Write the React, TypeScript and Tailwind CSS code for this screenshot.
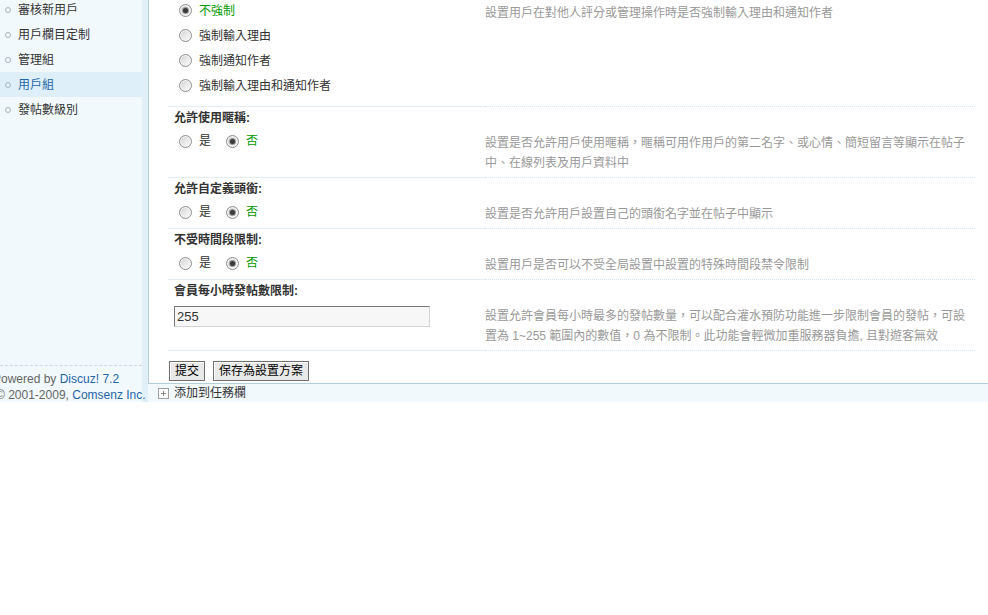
import type { ReactNode } from 'react';

const menu = [
  { label: '審核新用戶' },
  { label: '用戶欄目定制' },
  { label: '管理組' },
  { label: '用戶組', active: true },
  { label: '發帖數級別' },
];

// ─── Windows-style radio (drawn, so it doesn't pick up the browser accent) ────
function Radio({ checked = false }: Readonly<{ checked?: boolean }>) {
  return (
    <span className="inline-flex h-[13px] w-[13px] shrink-0 items-center justify-center rounded-full border border-[#8e8f8f] bg-linear-to-br from-[#cfcfcf] via-[#e9e9e9] to-[#fbfbfb] shadow-[inset_0_0_0_1px_#f4f4f4]">
      {checked && <span className="h-[5px] w-[5px] rounded-full bg-[#3a3a3a] shadow-[0_0_0_1px_#9a9a9a]" />}
    </span>
  );
}

function Option({ label, checked = false, className = '' }: Readonly<{ label: string; checked?: boolean; className?: string }>) {
  return (
    <label className={`flex items-center ${className}`}>
      <Radio checked={checked} />
      <span className={`ml-[7px] ${checked ? 'text-[#009900]' : 'text-[#333]'}`}>{label}</span>
    </label>
  );
}

function YesNo() {
  return (
    <div className="flex h-[16px] items-center pl-[5px]">
      <Option label="是" />
      <Option label="否" checked className="ml-[15px]" />
    </div>
  );
}

// ─── One setting: bold title row, then input cell + grey tip cell ─────────────
function Setting({
  title,
  left,
  desc,
  leftClass = 'pt-[5px] pb-[4px]',
}: Readonly<{ title?: string; left: ReactNode; desc: ReactNode; leftClass?: string }>) {
  return (
    <div>
      {title && <div className="flex h-[21px] items-center pl-[6px] font-bold text-[#333]">{title}</div>}
      <div className="flex">
        <div className={`w-[317px] shrink-0 border-b border-[#e2edf4] pl-[6px] ${leftClass}`}>{left}</div>
        <div className="flex-1 border-b border-dotted border-[#d3e6f3] pt-[5px] pb-[4px] leading-[20px] text-[#999]">
          {desc}
        </div>
      </div>
    </div>
  );
}

export default function App() {
  return (
    <div className="h-[615px] w-[988px] overflow-hidden bg-white text-[12px] text-[#333] font-['Liberation_Sans','Noto_Sans_CJK_TC',sans-serif]">
      <div className="flex h-[402px]">
        {/* Sidebar */}
        <aside className="flex w-[142px] shrink-0 flex-col bg-[#F2F9FD]">
          <ul className="-mt-[3px]">
            {menu.map(item => (
              <li
                key={item.label}
                className={`flex h-[25px] items-center pl-[5px] ${item.active ? 'bg-[#DEEFFA] text-[#2366A8]' : 'text-[#333]'}`}
              >
                <span className="h-[6px] w-[6px] rounded-full border border-[#a9b4ba]" />
                <span className="ml-[7px]">{item.label}</span>
              </li>
            ))}
          </ul>
          <div className="relative z-10 mt-[243px] border-t border-dashed border-[#cfd8dd] pt-[5px] leading-[16px] whitespace-nowrap text-[#666]">
            <p className="-ml-[7px]">
              Powered by <span className="text-[#2366A8]">Discuz! 7.2</span>
            </p>
            <p className="-ml-[4px]">
              © 2001-2009, <span className="text-[#2366A8]">Comsenz Inc.</span>
            </p>
          </div>
        </aside>
        <div className="w-[6px] shrink-0 bg-[#E1EFF8]" />

        {/* Main frame */}
        <div className="flex flex-1 flex-col">
          <main className="h-[386px] overflow-hidden border-b border-l border-[#B5CFD9] bg-white pr-[13px] pl-[19px]">
            <div className="-mt-[2px]">
              <Setting
                leftClass="pb-[8px]"
                left={
                  <div className="pl-[5px]">
                    <Option label="不強制" checked className="h-[25px]" />
                    <Option label="強制輸入理由" className="h-[25px]" />
                    <Option label="強制通知作者" className="h-[25px]" />
                    <Option label="強制輸入理由和通知作者" className="h-[25px]" />
                  </div>
                }
                desc="設置用戶在對他人評分或管理操作時是否強制輸入理由和通知作者"
              />
              <Setting
                title="允許使用暱稱:"
                left={<YesNo />}
                desc={
                  <>
                    設置是否允許用戶使用暱稱，暱稱可用作用戶的第二名字、或心情、簡短留言等顯示在帖子
                    <br />
                    中、在線列表及用戶資料中
                  </>
                }
              />
              <Setting title="允許自定義頭銜:" left={<YesNo />} desc="設置是否允許用戶設置自己的頭銜名字並在帖子中顯示" />
              <Setting title="不受時間段限制:" left={<YesNo />} desc="設置用戶是否可以不受全局設置中設置的特殊時間段禁令限制" />
              <Setting
                title="會員每小時發帖數限制:"
                left={
                  <input
                    defaultValue="255"
                    className="block h-[21px] w-[256px] border border-t-[#7a7a7a] border-r-[#d4d4d4] border-b-[#d4d4d4] border-l-[#7a7a7a] bg-[#F7F7F7] px-[2px] text-[13px] text-[#333] outline-none"
                  />
                }
                desc={
                  <>
                    設置允許會員每小時最多的發帖數量，可以配合灌水預防功能進一步限制會員的發帖，可設
                    <br />
                    置為 1~255 範圍內的數值，0 為不限制。此功能會輕微加重服務器負擔, 且對遊客無效
                  </>
                }
              />
              <div className="mt-[10px] flex gap-[8px] pl-[1px]">
                <button className="h-[20px] border border-[#707070] bg-[#e9e9e9] px-[5px] leading-[18px] text-black shadow-[inset_1px_1px_0_#fff]">
                  提交
                </button>
                <button className="h-[20px] border border-[#707070] bg-[#e9e9e9] px-[5px] leading-[18px] text-black shadow-[inset_1px_1px_0_#fff]">
                  保存為設置方案
                </button>
              </div>
            </div>
          </main>
          <div className="flex flex-1 items-center bg-[#F2F9FD] pl-[10px]">
            <span className="relative h-[11px] w-[11px] border border-[#a0a0a0] bg-white">
              <span className="absolute top-[4px] left-[2px] h-px w-[5px] bg-[#888]" />
              <span className="absolute top-[2px] left-[4px] h-[5px] w-px bg-[#888]" />
            </span>
            <span className="ml-[5px]">添加到任務欄</span>
          </div>
        </div>
      </div>
    </div>
  );
}
